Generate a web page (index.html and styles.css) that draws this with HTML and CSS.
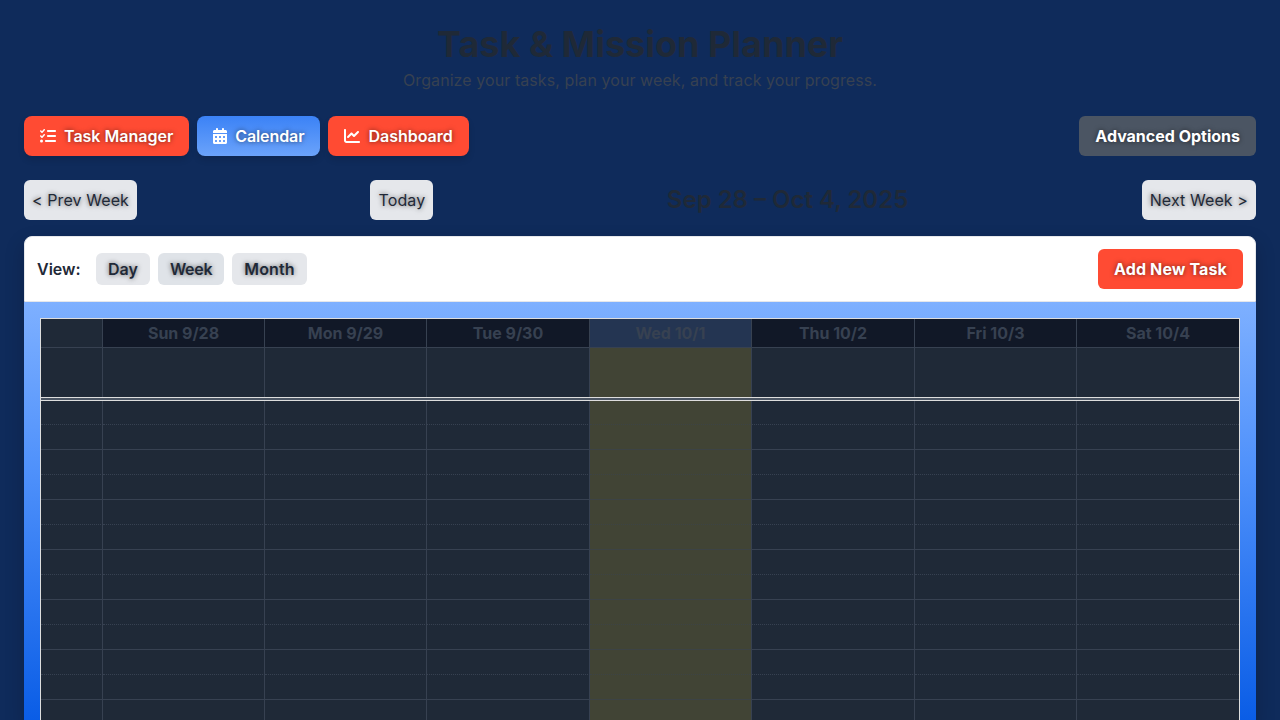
FILE: index.html
```
<!DOCTYPE html>
<html lang="en">
<head>
<meta charset="utf-8">
<title>Task &amp; Mission Planner</title>
<link rel="stylesheet" href="styles.css">
</head>
<body>
<header class="page-header">
  <h1 class="title">Task &amp; Mission Planner</h1>
  <p class="subtitle">Organize your tasks, plan your week, and track your progress.</p>
</header>
<nav class="tabs">
  <button class="btn tab"><svg class="icon" viewBox="0 0 512 512"><path d="M152 38c10 9 11 24 2 34l-72 80c-5 5-11 8-18 8s-13-3-18-7L7 113c-9-9-9-24 0-34s24-9 34 0l22 22 55-61c9-10 24-11 34-2zm0 160c10 9 11 24 2 34l-72 80c-5 5-11 8-18 8s-13-3-18-7L7 273c-9-9-9-24 0-34s24-9 34 0l22 22 55-61c9-10 24-11 34-2zM224 96c0-18 14-32 32-32h224c18 0 32 14 32 32s-14 32-32 32H256c-18 0-32-14-32-32zm0 160c0-18 14-32 32-32h224c18 0 32 14 32 32s-14 32-32 32H256c-18 0-32-14-32-32zm-64 160c0-18 14-32 32-32h288c18 0 32 14 32 32s-14 32-32 32H192c-18 0-32-14-32-32zM48 368a48 48 0 1 1 0 96 48 48 0 0 1 0-96z"/></svg>Task Manager</button>
  <button class="btn tab active"><svg class="icon narrow" viewBox="0 0 448 512"><path fill-rule="evenodd" d="M128 0c18 0 32 14 32 32v32h128V32c0-18 14-32 32-32s32 14 32 32v32h48c27 0 48 21 48 48v48H0v-48c0-27 21-48 48-48h48V32c0-18 14-32 32-32zM0 192h448v272c0 27-21 48-48 48H48c-27 0-48-21-48-48V192zm64 80v32c0 9 7 16 16 16h32c9 0 16-7 16-16v-32c0-9-7-16-16-16H80c-9 0-16 7-16 16zm128 0v32c0 9 7 16 16 16h32c9 0 16-7 16-16v-32c0-9-7-16-16-16h-32c-9 0-16 7-16 16zm144-16c-9 0-16 7-16 16v32c0 9 7 16 16 16h32c9 0 16-7 16-16v-32c0-9-7-16-16-16h-32zM64 400v32c0 9 7 16 16 16h32c9 0 16-7 16-16v-32c0-9-7-16-16-16H80c-9 0-16 7-16 16zm144-16c-9 0-16 7-16 16v32c0 9 7 16 16 16h32c9 0 16-7 16-16v-32c0-9-7-16-16-16h-32zm112 16v32c0 9 7 16 16 16h32c9 0 16-7 16-16v-32c0-9-7-16-16-16h-32c-9 0-16 7-16 16z"/></svg>Calendar</button>
  <button class="btn tab"><svg class="icon" viewBox="0 0 512 512"><path d="M64 64c0-18-14-32-32-32S0 46 0 64v336c0 44 36 80 80 80h400c18 0 32-14 32-32s-14-32-32-32H80c-9 0-16-7-16-16V64zm407 87c12-13 12-33 0-46s-33-12-46 0L320 211l-57-58c-13-12-33-12-46 0L105 265c-12 13-12 33 0 46s33 12 46 0l89-90 57 58c13 12 33 12 46 0l128-128z"/></svg>Dashboard</button>
  <button class="btn options">Advanced Options</button>
</nav>
<div class="week-nav">
  <button class="nav-btn">&lt; Prev Week</button>
  <button class="nav-btn today-btn">Today</button>
  <h2 class="range">Sep 28 – Oct 4, 2025</h2>
  <button class="nav-btn">Next Week &gt;</button>
</div>
<main class="panel">
  <div class="toolbar">
    <span class="view-label">View:</span>
    <button class="view-btn">Day</button>
    <button class="view-btn selected">Week</button>
    <button class="view-btn month">Month</button>
    <button class="btn add">Add New Task</button>
  </div>
  <div class="calendar-wrap">
    <div class="calendar">
      <div class="row head"><span class="axis"></span><span>Sun 9/28</span><span>Mon 9/29</span><span>Tue 9/30</span><span class="today">Wed 10/1</span><span>Thu 10/2</span><span>Fri 10/3</span><span>Sat 10/4</span></div>
      <div class="row all-day"><span></span><span></span><span></span><span></span><span class="today"></span><span></span><span></span><span></span></div>
      <div class="divider"></div>
      <div class="slots" id="slots"></div>
    </div>
  </div>
</main>
<script src="calendar.js"></script>
</body>
</html>
```
FILE: styles.css
```
* { box-sizing: border-box; }
html { height: 100%; overflow: hidden; }
body { margin: 0; height: 100%; padding: 24px 24px 0; overflow: hidden; display: flex; flex-direction: column; background: #0f2b5b; color: #1f2937; font: 16px/24px Inter, "Liberation Sans", sans-serif; }
h1, h2, p { margin: 0; }
button { border: 0; margin: 0; font: inherit; color: inherit; text-shadow: 0 0 5px rgba(0,0,0,.6); }
.page-header { text-align: center; height: 92px; flex: none; }
.title { font-size: 36px; line-height: 40px; font-weight: 700; height: 44px; }
.subtitle { color: #374151; letter-spacing: .075px; }
.tabs { display: flex; gap: 8px; height: 40px; flex: none; }
.btn { display: flex; align-items: center; height: 40px; padding: 0 16px; border-radius: 6px; background: #ff4b33; color: #fff; font-weight: 600; white-space: nowrap; }
.tab { border-radius: 8px; box-shadow: 0 4px 6px rgba(0,0,0,.12); }
.active { background: linear-gradient(#3b82f6, #6ba3fa); letter-spacing: -.1px; }
.icon { width: 16px; height: 16px; margin-right: 8px; fill: currentColor; }
.narrow { width: 14px; }
.btn.options { margin-left: auto; background: #4b5563; font-weight: 700; }
.week-nav { display: flex; justify-content: space-between; align-items: center; height: 40px; margin: 24px 0 16px; flex: none; }
.nav-btn { height: 40px; padding: 0 8px; border-radius: 6px; background: #e5e7eb; }
.nav-btn:first-child, .nav-btn:last-child { letter-spacing: .09px; }
.today-btn { letter-spacing: .15px; }
.range { font-size: 24px; line-height: 32px; font-weight: 600; }
.panel { flex: 1; min-height: 0; display: flex; flex-direction: column; border-radius: 8px 8px 0 0; box-shadow: 0 8px 20px rgba(0,0,0,.2); }
.toolbar { display: flex; align-items: center; gap: 8px; height: 66px; padding: 0 12px; flex: none; background: #fff; border: 1px solid #e5e7eb; border-radius: 8px 8px 0 0; }
.view-label { font-weight: 600; width: 43px; margin-right: 8px; }
.view-btn { height: 32px; padding: 0 12px; border-radius: 6px; background: #e5e7eb; font-weight: 600; }
.selected { background: #dfe3e8; letter-spacing: -.3px; }
.month { letter-spacing: .15px; }
.btn.add { margin-left: auto; font-weight: 700; letter-spacing: .12px; }
.calendar-wrap { flex: 1; min-height: 0; padding: 16px 16px 0; background: linear-gradient(#7eb0ff, #4f91fb 40%, #0a5de6); }
.calendar { height: 100%; overflow: hidden; border: 1px solid #ddd; border-bottom: 0; background: #1f2937; }
.row { display: grid; grid-template-columns: 62px 162px 162px 163px 162px 163px 162px 1fr; }
.row > span { border-right: 1px solid #374151; border-bottom: 1px solid #374151; }
.row > span:last-child { border-right: 0; }
.head { height: 29px; line-height: 28px; text-align: center; font-weight: 700; letter-spacing: -.02px; color: #374151; background: #111827; }
.head .axis { background: #1f2937; }
.head .today { background: #243552; }
.all-day { height: 49px; }
.row.all-day > span { border-bottom: 0; }
.all-day .today, .slot .today { background: #414435; }
.divider { height: 4px; border: solid #ddd; border-width: 1px 0; background: #4b5563; }
.slot { height: 25px; }
.slots .slot:first-child { height: 24px; }
.row.minor > span { border-bottom-style: dotted; }
.row.slot > .today { border-bottom-color: #3c4345; }
```
FILE: calendar.js
```
const slots = document.getElementById("slots");
for (let i = 0; i < 14; i++) {
  const row = document.createElement("div");
  row.className = "row slot" + (i % 2 === 0 ? " minor" : "");
  for (let c = 0; c < 8; c++) {
    const cell = document.createElement("span");
    if (c === 4) cell.className = "today";
    row.appendChild(cell);
  }
  slots.appendChild(row);
}
```
